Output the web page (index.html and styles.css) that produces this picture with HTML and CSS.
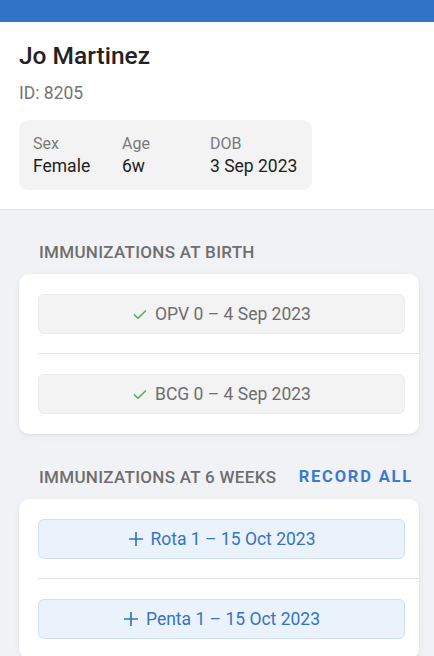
FILE: index.html
```html
<!DOCTYPE html>
<html>
<head>
<meta charset="utf-8">
<link rel="stylesheet" href="styles.css">
</head>
<body>
<div class="topbar"></div>
<header class="patient">
  <h1 class="name">Jo Martinez</h1>
  <div class="pid">ID: 8205</div>
  <div class="facts">
    <div class="fact"><div class="label">Sex</div><div class="value">Female</div></div>
    <div class="fact"><div class="label">Age</div><div class="value">6w</div></div>
    <div class="fact"><div class="label">DOB</div><div class="value">3 Sep 2023</div></div>
  </div>
</header>
<main class="content">
  <section class="group">
    <div class="group-head"><h2 class="group-title">IMMUNIZATIONS AT BIRTH</h2></div>
    <div class="card">
      <div class="row">
        <button class="dose done"><svg class="ico" viewBox="0 0 16 16" width="16" height="16"><path d="M2 8.5 L6 12.3 L14 4.5" fill="none" stroke="#4caf50" stroke-width="1.5"/></svg>OPV 0 – 4 Sep 2023</button>
      </div>
      <div class="row">
        <button class="dose done"><svg class="ico" viewBox="0 0 16 16" width="16" height="16"><path d="M2 8.5 L6 12.3 L14 4.5" fill="none" stroke="#4caf50" stroke-width="1.5"/></svg>BCG 0 – 4 Sep 2023</button>
      </div>
    </div>
  </section>
  <section class="group">
    <div class="group-head"><h2 class="group-title">IMMUNIZATIONS AT 6 WEEKS</h2><a class="record-all">RECORD ALL</a></div>
    <div class="card">
      <div class="row">
        <button class="dose due"><svg class="ico" viewBox="0 0 16 16" width="16" height="16"><path d="M8 1 V15 M1 8 H15" fill="none" stroke="#3674c2" stroke-width="1.7"/></svg>Rota 1 – 15 Oct 2023</button>
      </div>
      <div class="row">
        <button class="dose due"><svg class="ico" viewBox="0 0 16 16" width="16" height="16"><path d="M8 1 V15 M1 8 H15" fill="none" stroke="#3674c2" stroke-width="1.7"/></svg>Penta 1 – 15 Oct 2023</button>
      </div>
    </div>
  </section>
</main>
</body>
</html>
```
FILE: styles.css
```css
* { box-sizing: border-box; }
html, body { margin: 0; padding: 0; }
body {
  font-family: Roboto, "Noto Sans", sans-serif;
  background: #f1f2f6;
  color: #222;
  height: 656px;
  overflow: hidden;
}
.topbar { height: 22px; background: #3174c7; }
.patient {
  background: #fff;
  padding: 18px 19px 19px;
  border-bottom: 1px solid #e2e3e7;
}
.name {
  margin: 0;
  font-size: 24.5px;
  font-weight: 500;
  line-height: 32px;
  color: #222;
}
.pid {
  margin-top: 10px;
  font-size: 17.5px;
  line-height: 22px;
  color: #757575;
}
.facts {
  margin-top: 16px;
  display: inline-grid;
  grid-template-columns: 89px 88px auto;
  background: #f3f3f4;
  border-radius: 9px;
  padding: 13px 15px 13px 14px;
}
.label { font-size: 16px; line-height: 21px; color: #7a7a7a; }
.value { font-size: 17.5px; line-height: 22px; color: #222; margin-top: 1px; }
.content { padding: 0 15px 0 19px; }
.group-head {
  display: flex;
  justify-content: space-between;
  align-items: center;
  padding: 20px 6px 0 20px;
  height: 64px;
}
.group + .group .group-head { padding-top: 21px; height: 65px; }
.group-title {
  margin: 0;
  font-size: 17px;
  font-weight: 500;
  color: #6e6e6e;
  letter-spacing: 0.3px;
  line-height: 22px;
}
.record-all {
  font-size: 16.5px;
  font-weight: 700;
  color: #3a7bd0;
  letter-spacing: 1.8px;
  line-height: 22px;
}
.card {
  background: #fff;
  border-radius: 10px;
  box-shadow: 0 1px 3px rgba(0,0,0,0.06), 0 2px 8px rgba(0,0,0,0.04);
  padding-left: 19px;
}
.row {
  padding: 20px 14px 19px 0;
}
.row:last-child { padding-bottom: 20px; }
.row + .row { border-top: 1px solid #e4e4e6; }
.dose {
  width: 100%;
  height: 40px;
  display: flex;
  align-items: center;
  justify-content: center;
  gap: 7px;
  font-family: Roboto, "Noto Sans", sans-serif;
  font-size: 17.5px;
  border-radius: 6px;
  padding: 0;
}
.done {
  background: #f3f3f4;
  border: 1px solid #ececee;
  color: #6e6e6e;
}
.due {
  background: #eaf2fb;
  border: 1px solid #cfe0f3;
  color: #3674c2;
}
.ico { flex: none; }
```
